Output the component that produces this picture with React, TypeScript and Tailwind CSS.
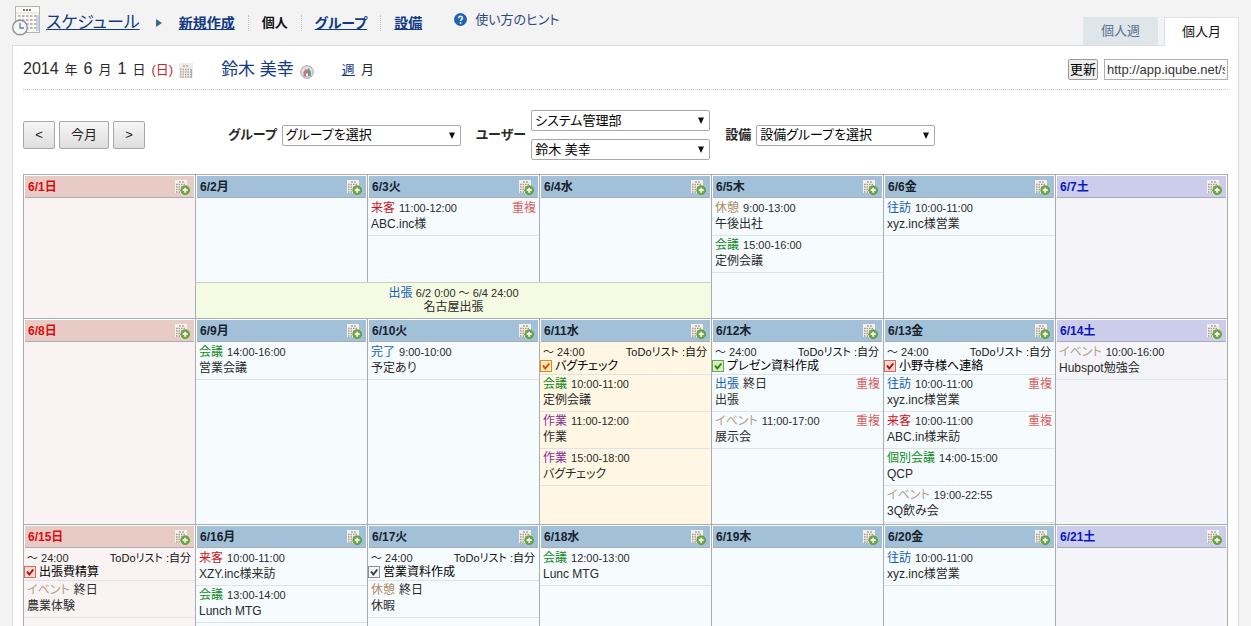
import { useState } from "react";
import clsx from "clsx";

type Kind = "visitor" | "meeting" | "break" | "visit" | "done" | "work" | "trip" | "event";

type Entry = { kind: Kind; label: string; time: string; title: string; overlap?: boolean };
type Todo = { title: string; tone: "orange" | "green" | "red" | "gray" };
type Day = { date: string; entries?: Entry[]; todo?: Todo; today?: boolean };
type Span = { from: number; days: number; label: string; time: string; title: string };
type Week = { days: Day[]; span?: Span };

const kindColor: Record<Kind, string> = {
  visitor: "text-[#d0101c]",
  meeting: "text-[#0f8a1c]",
  break: "text-[#b08a60]",
  visit: "text-[#1261b8]",
  done: "text-[#1261b8]",
  work: "text-[#8a2a9c]",
  trip: "text-[#1261b8]",
  event: "text-[#b3a08c]",
};

const tones = {
  orange: { box: "border-[#e08a1e] bg-[#ffe9b8]", tick: "#d2480c" },
  green: { box: "border-[#6aa84a] bg-[#d8f0c0]", tick: "#2f7a1c" },
  red: { box: "border-[#d86a62] bg-[#fbd8d2]", tick: "#a81410" },
  gray: { box: "border-[#8a9096] bg-[#f2f4f5]", tick: "#3a3f44" },
};

const weeks: Week[] = [
  {
    days: [
      { date: "6/1日" },
      { date: "6/2月" },
      {
        date: "6/3火",
        entries: [{ kind: "visitor", label: "来客", time: "11:00-12:00", title: "ABC.inc様", overlap: true }],
      },
      { date: "6/4水" },
      {
        date: "6/5木",
        entries: [
          { kind: "break", label: "休憩", time: "9:00-13:00", title: "午後出社" },
          { kind: "meeting", label: "会議", time: "15:00-16:00", title: "定例会議" },
        ],
      },
      {
        date: "6/6金",
        entries: [{ kind: "visit", label: "往訪", time: "10:00-11:00", title: "xyz.inc様営業" }],
      },
      { date: "6/7土" },
    ],
    span: { from: 1, days: 3, label: "出張", time: "6/2 0:00 ～ 6/4 24:00", title: "名古屋出張" },
  },
  {
    days: [
      { date: "6/8日" },
      {
        date: "6/9月",
        entries: [{ kind: "meeting", label: "会議", time: "14:00-16:00", title: "営業会議" }],
      },
      {
        date: "6/10火",
        entries: [{ kind: "done", label: "完了", time: "9:00-10:00", title: "予定あり" }],
      },
      {
        date: "6/11水",
        today: true,
        todo: { title: "バグチェック", tone: "orange" },
        entries: [
          { kind: "meeting", label: "会議", time: "10:00-11:00", title: "定例会議" },
          { kind: "work", label: "作業", time: "11:00-12:00", title: "作業" },
          { kind: "work", label: "作業", time: "15:00-18:00", title: "バグチェック" },
        ],
      },
      {
        date: "6/12木",
        todo: { title: "プレゼン資料作成", tone: "green" },
        entries: [
          { kind: "trip", label: "出張", time: "終日", title: "出張", overlap: true },
          { kind: "event", label: "イベント", time: "11:00-17:00", title: "展示会", overlap: true },
        ],
      },
      {
        date: "6/13金",
        todo: { title: "小野寺様へ連絡", tone: "red" },
        entries: [
          { kind: "visit", label: "往訪", time: "10:00-11:00", title: "xyz.inc様営業", overlap: true },
          { kind: "visitor", label: "来客", time: "10:00-11:00", title: "ABC.in様来訪", overlap: true },
          { kind: "meeting", label: "個別会議", time: "14:00-15:00", title: "QCP" },
          { kind: "event", label: "イベント", time: "19:00-22:55", title: "3Q飲み会" },
        ],
      },
      {
        date: "6/14土",
        entries: [{ kind: "event", label: "イベント", time: "10:00-16:00", title: "Hubspot勉強会" }],
      },
    ],
  },
  {
    days: [
      {
        date: "6/15日",
        todo: { title: "出張費精算", tone: "red" },
        entries: [{ kind: "event", label: "イベント", time: "終日", title: "農業体験" }],
      },
      {
        date: "6/16月",
        entries: [
          { kind: "visitor", label: "来客", time: "10:00-11:00", title: "XZY.inc様来訪" },
          { kind: "meeting", label: "会議", time: "13:00-14:00", title: "Lunch MTG" },
        ],
      },
      {
        date: "6/17火",
        todo: { title: "営業資料作成", tone: "gray" },
        entries: [{ kind: "break", label: "休憩", time: "終日", title: "休暇" }],
      },
      {
        date: "6/18水",
        entries: [{ kind: "meeting", label: "会議", time: "12:00-13:00", title: "Lunc MTG" }],
      },
      { date: "6/19木" },
      {
        date: "6/20金",
        entries: [{ kind: "visit", label: "往訪", time: "10:00-11:00", title: "xyz.inc様営業" }],
      },
      { date: "6/21土" },
    ],
  },
];

function ScheduleIcon() {
  return (
    <svg className="mb-1" width="30" height="32" viewBox="0 0 30 32" aria-hidden="true">
      <rect x="3.500" y="1.500" width="24" height="26" fill="#fbfaf6" stroke="#b9b4aa" />
      <path d="M4 8h23" stroke="#dedad2" />
      <path d="M11 5h9" stroke="#777" strokeWidth="2" strokeDasharray="2 1" />
      <path d="M6 11h20M6 15h20M6 19h20M6 23h20" stroke="#a8a39c" strokeWidth="1.600" strokeDasharray="2.500 1.500" />
      <path d="M25.500 10v16" stroke="#a9bcd6" strokeWidth="3" opacity=".6" />
      <circle cx="8" cy="22.500" r="7.300" fill="#f4f5f6" stroke="#8e9196" strokeWidth="1.400" />
      <path d="M8 18v5h4" fill="none" stroke="#6d7a88" strokeWidth="1.300" />
    </svg>
  );
}

function SmallCalendarIcon() {
  return (
    <svg width="14" height="15" viewBox="0 0 14 15" aria-hidden="true">
      <rect width="14" height="15" fill="#f0ece8" />
      <path d="M4 3h6" stroke="#8a8580" strokeDasharray="2 1" />
      <path d="M1 6.500h12M1 9h12M1 11.500h12M1 14h12" stroke="#b3a6a0" strokeWidth="1.400" strokeDasharray="1.500 1" />
      <path d="M12.500 6v9" stroke="#9fb4d2" />
    </svg>
  );
}

function ProfileIcon() {
  return (
    <svg width="14" height="14" viewBox="0 0 14 14" aria-hidden="true">
      <circle cx="7" cy="7" r="6.300" fill="#e4e1e4" stroke="#a7a0a8" />
      <path d="M3.500 11.500V7L6 3.500 7 6v5.500z" fill="#d76a80" />
      <path d="M7 11.500V5l2-2 2 4v4z" fill="#6f9e86" />
      <path d="M6 11V8.500h2V11z" fill="#f4f4f4" />
    </svg>
  );
}

function AddIcon() {
  return (
    <svg width="15" height="15" viewBox="0 0 15 15" aria-hidden="true">
      <rect width="12" height="13" fill="#f3efe9" />
      <path d="M4 2h5" stroke="#8c8780" strokeDasharray="2 1" />
      <path d="M1 4.500h10M1 7h10M1 9.500h6M1 12h5" stroke="#ab9692" strokeWidth="1.300" strokeDasharray="1.500 1" />
      <circle cx="10.200" cy="10.200" r="4.400" fill="#6cab42" stroke="#4f8f2c" strokeWidth=".7" />
      <path d="M10.200 7.700v5M7.700 10.200h5" stroke="#fff" strokeWidth="1.700" />
    </svg>
  );
}

function HelpIcon() {
  return (
    <svg width="13" height="13" viewBox="0 0 13 13" aria-hidden="true">
      <circle cx="6.500" cy="6.500" r="6" fill="#1d66b8" stroke="#154f96" strokeWidth=".8" />
      <path d="M4.600 5.200c0-2.600 3.900-2.400 3.900-.2 0 1.400-1.900 1.400-1.900 2.900" fill="none" stroke="#fff" strokeWidth="1.500" />
      <circle cx="6.600" cy="9.900" r=".9" fill="#fff" />
    </svg>
  );
}

function Separator() {
  return <span className="h-4 border-l border-dotted border-[#c4c4c4]" />;
}

function SelectBox({ label, options }: { label: string; options: string[] }) {
  return (
    <span className="relative block w-[179px]">
      <select
        aria-label={label}
        className="block h-[21px] w-full appearance-none rounded-xs border border-[#a9a9a9] bg-white pr-5 pl-[3px] text-[13px] leading-4 font-normal text-black"
      >
        {options.map((o) => (
          <option key={o}>{o}</option>
        ))}
      </select>
      <svg
        className="pointer-events-none absolute top-[7px] right-1.5"
        width="6"
        height="7"
        viewBox="0 0 6 7"
        aria-hidden="true"
      >
        <path d="M0 .5h6L3 7z" fill="#111" />
      </svg>
    </span>
  );
}

function TodoItem({ todo }: { todo: Todo }) {
  const [checked, setChecked] = useState(true);
  const tone = tones[todo.tone];
  return (
    <div className="border-b border-[#dde3e6] pt-[3px] pb-px">
      <div className="flex justify-between pr-1 pl-[3px] text-[11px] leading-[13px]">
        <span>～ 24:00</span>
        <span className="text-[#111]">ToDoリスト :自分</span>
      </div>
      <label className="flex items-center gap-[3px] text-xs leading-[14px] text-black">
        <span className="relative size-3 shrink-0">
          <input
            type="checkbox"
            checked={checked}
            onChange={(e) => setChecked(e.target.checked)}
            className={clsx("block size-3 appearance-none border", tone.box)}
          />
          {checked && (
            <svg className="pointer-events-none absolute inset-0" width="12" height="12" viewBox="0 0 12 12">
              <path d="M3 5.500l2.300 3L9.300 3.500" fill="none" stroke={tone.tick} strokeWidth="2" />
            </svg>
          )}
        </span>
        {todo.title}
      </label>
    </div>
  );
}

function EntryItem({ entry }: { entry: Entry }) {
  return (
    <div className="border-b border-[#dde3e6] pt-px pr-[3px] pb-[3px] pl-[3px] text-xs leading-4">
      <div className="flex">
        <span className={kindColor[entry.kind]}>{entry.label}</span>
        <span className={clsx("ml-1", entry.time.includes(":") && "text-[11px]")}>{entry.time}</span>
        {entry.overlap && <span className="ml-auto text-[#d9605f]">重複</span>}
      </div>
      <div>{entry.title}</div>
    </div>
  );
}

function WeekRows({ week }: { week: Week }) {
  const { span } = week;
  const inSpan = (i: number) => !!span && i >= span.from && i < span.from + span.days;

  return (
    <>
      <tr>
        {week.days.map((day, i) => (
          <th key={day.date} scope="col" className="border-t border-l border-[#a8adb4] p-px pb-0 text-left">
            <div
              className={clsx(
                "flex h-[22px] items-center justify-between border-b border-[#a8adb4] pr-1 pl-[3px]",
                i === 0 && "bg-[#e8cbc5] text-[#dc0c10]",
                i === 6 && "bg-[#cbcdeb] text-[#0818c0]",
                i > 0 && i < 6 && "bg-[#a2c1d8] text-[#18222c]"
              )}
            >
              <span className="text-xs leading-4 font-bold">{day.date}</span>
              <button aria-label={`${day.date}に追加`} className="pt-0.5">
                <AddIcon />
              </button>
            </div>
          </th>
        ))}
      </tr>
      <tr>
        {week.days.map((day, i) => (
          <td
            key={day.date}
            rowSpan={span && !inSpan(i) ? 2 : 1}
            className={clsx(
              "border-l border-[#a8adb4] pt-px pb-px align-top",
              span ? "h-[84px]" : "h-[120px]",
              i === 0 && "bg-[#f9f3f3]",
              i === 6 && "bg-[#f5f5f9]",
              i > 0 && i < 6 && (day.today ? "bg-[#fff7e3]" : "bg-[#f6fcfe]")
            )}
          >
            {day.todo && <TodoItem todo={day.todo} />}
            {day.entries?.map((entry, n) => <EntryItem key={n} entry={entry} />)}
          </td>
        ))}
      </tr>
      {span && (
        <tr>
          <td
            colSpan={span.days}
            className="h-9 border-t border-l border-t-[#c8cfba] border-l-[#a8adb4] bg-[#f5fbe3] pt-[3px] text-center align-top text-xs leading-[14px]"
          >
            <div>
              <span className="text-[#1261b8]">{span.label}</span> <span className="text-[11px]">{span.time}</span>
            </div>
            <div>{span.title}</div>
          </td>
        </tr>
      )}
    </>
  );
}

const navLink = "text-sm font-bold text-[#123a84] underline";
const monthButton =
  "h-7 rounded-xs border border-[#a8a8a8] bg-linear-to-b from-[#f6f6f6] to-[#dedede] text-[13px] text-[#222]";

export default function App() {
  return (
    <div className="min-h-screen bg-[#f3f3f3] px-3 font-['Liberation_Sans','Noto_Sans_CJK_JP',sans-serif] text-[#2a2a2a] [font-feature-settings:'palt']">
      <header className="flex h-[45px] justify-between">
        <nav className="flex h-[45px] items-center">
          <ScheduleIcon />
          <a href="#schedule" className="ml-1 text-[17px] leading-6 text-[#123a84] underline">
            スケジュール
          </a>
          <svg className="mx-4" width="7" height="8" viewBox="0 0 7 8" aria-hidden="true">
            <path d="M0 0l6 4-6 4z" fill="#3f6888" />
          </svg>
          <div className="flex items-center gap-[13px]">
            <a href="#new" className={navLink}>新規作成</a>
            <Separator />
            <span className="text-[13px] font-bold text-[#111]">個人</span>
            <Separator />
            <a href="#group" className={navLink}>グループ</a>
            <Separator />
            <a href="#facility" className={navLink}>設備</a>
          </div>
          <a href="#hint" className="mb-1.5 ml-8 flex items-center gap-2 text-[13px] text-[#2f4a82]">
            <HelpIcon />
            使い方のヒント
          </a>
        </nav>
        <div className="flex items-end gap-1.5 text-[13px]">
          <a href="#week" className="flex h-7 w-[75px] items-center justify-center bg-[#dfe6ea] text-[#5b6f94]">
            個人週
          </a>
          <a
            href="#month"
            className="relative -mb-px flex h-[29px] w-[75px] items-center justify-center border border-b-0 border-[#e2e2e2] bg-white text-[#111]"
          >
            個人月
          </a>
        </div>
      </header>

      <main className="border border-[#dedede] bg-white px-2.5">
        <div className="flex h-11 items-center justify-between border-b border-dotted border-[#c4c4c4] pt-1">
          <div className="flex items-center">
            <div className="flex items-baseline gap-1.5 text-[13px] leading-6">
              <span className="text-base">2014</span>年<span className="text-base">6</span>月
              <span className="text-base">1</span>日<span className="text-[#c22a30]">(日)</span>
            </div>
            <span className="mt-0.5 ml-1.5">
              <SmallCalendarIcon />
            </span>
            <h1 className="ml-7 text-[17px] leading-6 text-[#123a84]">鈴木 美幸</h1>
            <span className="mt-1 ml-1.5">
              <ProfileIcon />
            </span>
            <a href="#w" className="ml-7 text-[13px] text-[#123a84] underline">週</a>
            <span className="ml-1.5 text-[13px]">月</span>
          </div>
          <div className="flex items-center gap-1.5">
            <button className="h-[21px] rounded-xs border border-[#999] bg-[#eee] px-px text-[13px] leading-4 text-black">
              更新
            </button>
            <input
              aria-label="URL"
              defaultValue="http://app.iqube.net/s"
              className="h-[21px] w-[124px] border border-[#b0b0a8] bg-white px-0.5 text-[13px] text-[#333]"
            />
          </div>
        </div>

        <div className="flex items-center pt-5 pb-3.5">
          <div className="flex gap-1">
            <button aria-label="前月" className={clsx(monthButton, "w-8")}>&lt;</button>
            <button className={clsx(monthButton, "w-[50px]")}>今月</button>
            <button aria-label="翌月" className={clsx(monthButton, "w-8")}>&gt;</button>
          </div>
          <div className="ml-[83px] flex items-center gap-[15px] text-[13px] font-bold">
            <div className="flex items-center gap-[5px]">
              グループ
              <SelectBox label="グループ" options={["グループを選択"]} />
            </div>
            <div className="flex items-center gap-[5px]">
              ユーザー
              <div className="flex flex-col gap-2">
                <SelectBox label="ユーザーの部署" options={["システム管理部"]} />
                <SelectBox label="ユーザー" options={["鈴木 美幸"]} />
              </div>
            </div>
            <div className="flex items-center gap-[5px]">
              設備
              <SelectBox label="設備" options={["設備グループを選択"]} />
            </div>
          </div>
        </div>

        <table className="w-full table-fixed border-separate border-spacing-0 border-r border-b border-[#a8adb4]">
          <tbody>
            {weeks.map((week) => (
              <WeekRows key={week.days[0].date} week={week} />
            ))}
          </tbody>
        </table>
      </main>
    </div>
  );
}
